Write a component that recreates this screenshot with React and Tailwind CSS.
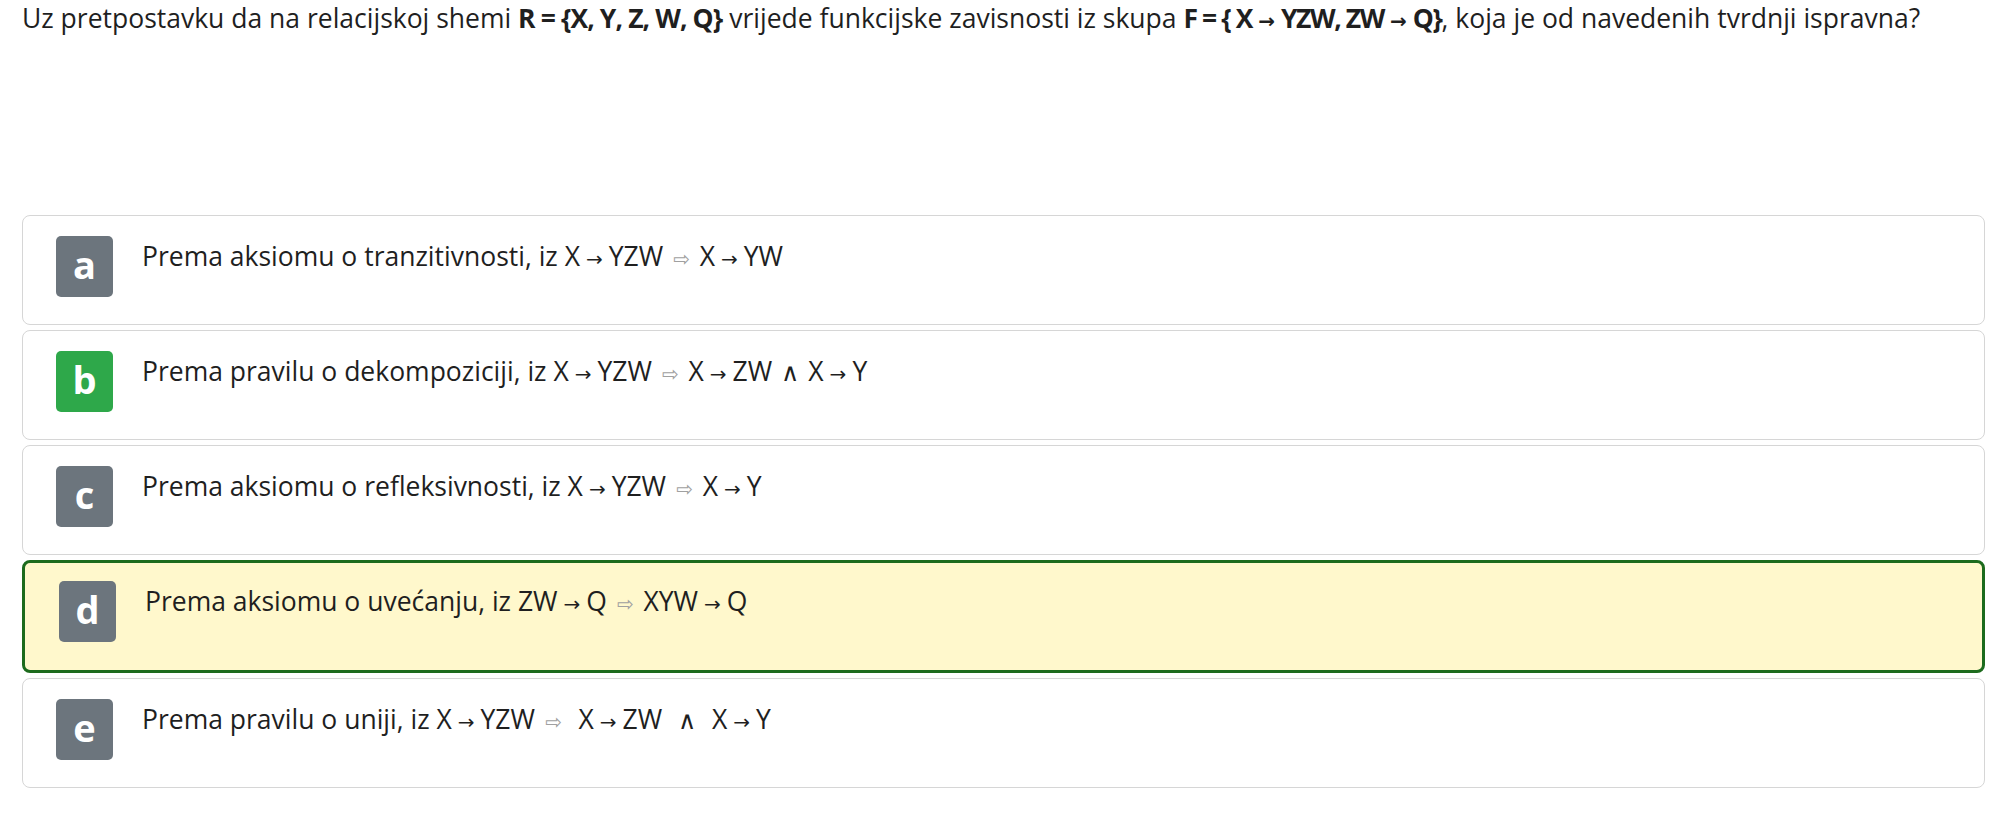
import React from 'react';

const Arrow = () => <span className="ml-[6px] mr-[6px] font-['DejaVu_Sans'] text-[20px] tracking-normal">→</span>;
const Implies = () => <span className="mx-[3px] font-['DejaVu_Sans'] text-[20px] text-[#a0a0a0]">⇨</span>;
const And = () => <span className="mx-[2px] font-['DejaVu_Sans'] text-[25px] leading-none">∧</span>;

const options = [
  {
    letter: 'a',
    text: (
      <>
        Prema aksiomu o tranzitivnosti, iz X<Arrow />YZW <Implies /> X<Arrow />YW
      </>
    ),
  },
  {
    letter: 'b',
    correct: true,
    text: (
      <>
        Prema pravilu o dekompoziciji, iz X<Arrow />YZW <Implies /> X<Arrow />ZW <And /> X<Arrow />Y
      </>
    ),
  },
  {
    letter: 'c',
    text: (
      <>
        Prema aksiomu o refleksivnosti, iz X<Arrow />YZW <Implies /> X<Arrow />Y
      </>
    ),
  },
  {
    letter: 'd',
    selected: true,
    text: (
      <>
        Prema aksiomu o uvećanju, iz ZW<Arrow />Q <Implies /> XYW<Arrow />Q
      </>
    ),
  },
  {
    letter: 'e',
    text: (
      <>
        Prema pravilu o uniji, iz X<Arrow />YZW <Implies />{'\u00a0'} X<Arrow />ZW {'\u00a0'}<And />{'\u00a0'} X<Arrow />Y
      </>
    ),
  },
];

function Option({ letter, text, correct, selected }) {
  const box = selected
    ? 'border-[3px] border-[#1d6b1d] bg-[#fff8cc] pl-[34px] pt-[18px] pb-[28px]'
    : 'border border-[#d6d6d6] bg-white pl-[33px] pt-[20px] pb-[27px]';
  const badge = correct ? 'bg-[#2ea84a]' : 'bg-[#6c757d]';

  return (
    <div className={`flex items-start gap-[29px] rounded-[8px] ${box}`}>
      <div
        className={`flex h-[61px] w-[57px] shrink-0 items-center justify-center rounded-[5px] ${badge} text-[38px] font-bold leading-none text-white`}
      >
        <span className="-mt-[6px]">{letter}</span>
      </div>
      <p className="mt-[3px] text-[26.5px] leading-[1.3] text-[#1f1f1f]">{text}</p>
    </div>
  );
}

export default function App() {
  return (
    <div className="min-h-screen bg-white pl-[22px] pr-[15px] font-['Open_Sans',sans-serif]">
      <p className="pt-[1px] text-[26.5px] leading-[1.3] text-[#1f1f1f]">
        Uz pretpostavku da na relacijskoj shemi{' '}
        <b className="tracking-[-0.9px]">R = {'{'}X, Y, Z, W, Q{'}'}</b> vrijede funkcijske
        zavisnosti iz skupa{' '}
        <b className="tracking-[-1.4px]">
          F = {'{'} X<Arrow />YZW, ZW<Arrow />Q{'}'}
        </b>
        , koja je od navedenih tvrdnji ispravna?
      </p>

      <div className="mt-[180px] flex flex-col gap-[5px]">
        {options.map((o) => (
          <Option key={o.letter} {...o} />
        ))}
      </div>
    </div>
  );
}
